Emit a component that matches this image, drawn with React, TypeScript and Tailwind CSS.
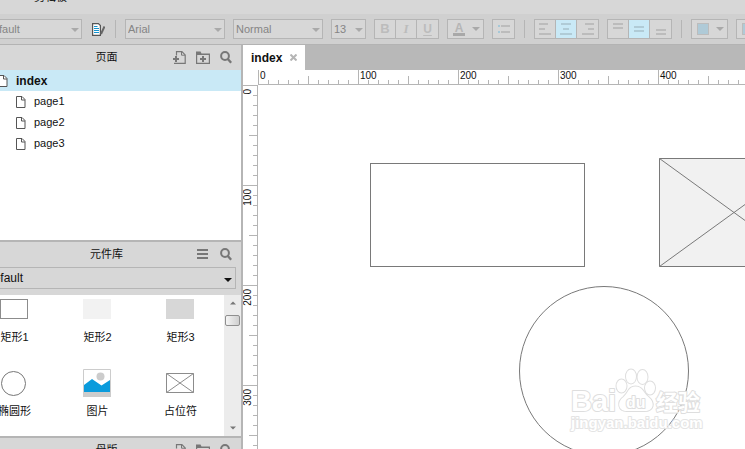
import type { ReactNode } from "react";
import { clsx } from "clsx";

const pages = ["page1", "page2", "page3"];

const ticks = Array.from({ length: 200 }, (_, i) => i);

const alignments = [
  { label: "左对齐", bars: [[0, 9], [0, 6], [0, 12]], side: "start" },
  { label: "居中对齐", bars: [[1, 10], [3, 6], [0, 12]], side: "center" },
  { label: "右对齐", bars: [[3, 9], [6, 6], [0, 12]], side: "end" },
];

const verticals = [
  { label: "顶部对齐", ys: [1, 5] },
  { label: "垂直居中", ys: [4, 8] },
  { label: "底部对齐", ys: [7, 11] },
];

function Caret({ className }: { className?: string }) {
  return (
    <svg viewBox="0 0 8 4" className={clsx("pointer-events-none h-1 w-2", className)} aria-hidden>
      <path d="M0 0h8L4 4z" fill="currentColor" />
    </svg>
  );
}

function PageIcon() {
  return (
    <svg viewBox="0 0 10 12" className="h-3 w-[10px] shrink-0" fill="none" stroke="#555" aria-hidden>
      <path d="M.5.5h5.500l3 3v8H.5z" fill="#fff" />
      <path d="M5.500.5v3.500h3.500" />
    </svg>
  );
}

function AddPageIcon() {
  return (
    <svg viewBox="0 0 13 13" className="size-[13px]" fill="none" stroke="#777" aria-hidden>
      <path d="M3.500 4.500V.6h5.400l3.300 3.300v8.500H1" strokeWidth="1.200" />
      <path d="M8.500.7v3.500h3.500" />
      <path d="M3 5v6M0 8h6" strokeWidth="2" />
    </svg>
  );
}

function AddFolderIcon() {
  return (
    <svg viewBox="0 0 14 13" className="h-[13px] w-[14px]" fill="none" stroke="#777" aria-hidden>
      <path d="M0 .5h4.500l1 2H14v1.500H0z" fill="#777" stroke="none" />
      <path d="M.6 3v9.400h12.800V3" strokeWidth="1.200" />
      <path d="M7 5v6M4 8h6" strokeWidth="2" />
    </svg>
  );
}

function SearchIcon() {
  return (
    <svg viewBox="0 0 12 13" className="h-[13px] w-3" fill="none" stroke="#777" strokeWidth="2" aria-hidden>
      <circle cx="5" cy="5" r="3.900" />
      <path d="M7.800 8l3.400 3.800" strokeWidth="2.400" />
    </svg>
  );
}

function MenuIcon() {
  return (
    <svg viewBox="0 0 11 11" className="size-[11px]" fill="#777" aria-hidden>
      <path d="M0 0h11v2H0zM0 4h11v2H0zM0 8h11v2H0z" />
    </svg>
  );
}

function ToolSelect({ label, value, className }: { label: string; value: string; className: string }) {
  return (
    <div className={clsx("relative shrink-0", className)}>
      <select
        aria-label={label}
        className="block h-5 w-full appearance-none border border-[#b5b5b5] bg-[#d7d7d7] pl-0.5 text-[11px] text-[#858585]"
      >
        <option>{value}</option>
      </select>
      <Caret className="absolute top-[9px] right-[3px] text-[#a9a9a9]" />
    </div>
  );
}

function ToolButton({ label, active, children }: { label: string; active?: boolean; children: ReactNode }) {
  return (
    <button
      type="button"
      aria-label={label}
      className={clsx(
        "flex h-[18px] w-[21px] items-center justify-center",
        active ? "bg-[#c9e9f6] text-[#b0cbd6]" : "text-[#bcbcbc]"
      )}
    >
      {children}
    </button>
  );
}

function ButtonGroup({ children }: { children: ReactNode }) {
  return (
    <div className="flex shrink-0 divide-x divide-[#b5b5b5] border border-[#b5b5b5] bg-[#d7d7d7]">
      {children}
    </div>
  );
}

function Separator() {
  return <div className="mx-px h-[18px] w-px shrink-0 bg-[#b5b5b5]" />;
}

function Toolbar() {
  return (
    <div className="flex h-[31px] shrink-0 items-center gap-2 overflow-hidden border-b border-[#b3b3b3] bg-[#d0d0d0] pl-[10px]">
      <ToolSelect label="样式" value="Default" className="w-[100px]" />
      <button type="button" aria-label="样式管理" className="mr-px ml-0.5 shrink-0">
        <svg viewBox="0 0 13 13" className="size-[13px]" fill="none" aria-hidden>
          <path d="M.6.6h5.800l2 2v9.800H.6z" fill="#fff" stroke="#555" strokeWidth="1.200" />
          <path d="M2 3.500h3.500M2 5.500h5M2 7.500h5M2 9.500h5" stroke="#1294d0" />
          <path d="M12.500 3.500L9 11" stroke="#666" strokeWidth="2" />
        </svg>
      </button>
      <Separator />
      <ToolSelect label="字体" value="Arial" className="w-[100px]" />
      <ToolSelect label="字型" value="Normal" className="w-[90px]" />
      <ToolSelect label="字号" value="13" className="w-[35px]" />
      <ButtonGroup>
        <ToolButton label="粗体">
          <span className="text-[13px] font-bold">B</span>
        </ToolButton>
        <ToolButton label="斜体">
          <span className="font-['Liberation_Serif',serif] text-[13px] font-bold italic">I</span>
        </ToolButton>
        <ToolButton label="下划线">
          <span className="text-[12px] font-bold underline underline-offset-2">U</span>
        </ToolButton>
      </ButtonGroup>
      <button
        type="button"
        aria-label="文字颜色"
        className="flex h-5 w-[37px] shrink-0 items-center justify-between border border-[#b5b5b5] bg-[#d7d7d7] pr-[3px] pl-[5px] text-[#a9a9a9]"
      >
        <span className="w-3 border-b-3 border-[#a9a9a9] text-[12px]/[10px] font-bold text-[#b5b5b5]">A</span>
        <Caret />
      </button>
      <ButtonGroup>
        <ToolButton label="项目符号">
          <svg viewBox="0 0 12 8" className="h-2 w-3" aria-hidden>
            <path d="M0 0h2v2H0zM0 6h2v2H0z" fill="#a5c8d8" />
            <path d="M3 0h9v2H3zM3 6h9v2H3z" fill="currentColor" />
          </svg>
        </ToolButton>
      </ButtonGroup>
      <Separator />
      <ButtonGroup>
        {alignments.map((a) => (
          <ToolButton key={a.label} label={a.label} active={a.side === "center"}>
            <svg viewBox="0 0 12 12" className="size-3" fill="currentColor" aria-hidden>
              {a.bars.map(([x, w], i) => (
                <rect key={i} x={x} y={i * 5} width={w} height="2" />
              ))}
            </svg>
          </ToolButton>
        ))}
      </ButtonGroup>
      <ButtonGroup>
        {verticals.map((v, i) => (
          <ToolButton key={v.label} label={v.label} active={i === 1}>
            <svg viewBox="0 0 10 14" className="h-[14px] w-[10px]" fill="currentColor" aria-hidden>
              {v.ys.map((y) => (
                <rect key={y} y={y} width="10" height="2" />
              ))}
            </svg>
          </ToolButton>
        ))}
      </ButtonGroup>
      <Separator />
      {["填充颜色", "线条颜色"].map((label) => (
        <button
          key={label}
          type="button"
          aria-label={label}
          className="flex h-5 w-[37px] shrink-0 items-center justify-between border border-[#b5b5b5] bg-[#d7d7d7] pr-[3px] pl-[5px] text-[#a9a9a9]"
        >
          <span className="size-3 border border-[#bcbcbc] bg-[#afcad7]" />
          <Caret />
        </button>
      ))}
    </div>
  );
}

function PanelHeader({ title, children }: { title: string; children: ReactNode }) {
  return (
    <div className="relative flex h-[25px] shrink-0 items-center justify-center bg-[#d7d7d7]">
      <h2 className="text-[11px]">{title}</h2>
      <div className="absolute right-[9px] flex items-center gap-[10px]">{children}</div>
    </div>
  );
}

function PageTools() {
  return (
    <>
      <button type="button" aria-label="新增页面">
        <AddPageIcon />
      </button>
      <button type="button" aria-label="新增文件夹">
        <AddFolderIcon />
      </button>
      <button type="button" aria-label="搜索">
        <SearchIcon />
      </button>
    </>
  );
}

function PagesPanel() {
  return (
    <section className="flex h-[195px] shrink-0 flex-col">
      <PanelHeader title="页面">
        <PageTools />
      </PanelHeader>
      <ul className="flex-1 bg-white">
        <li className="flex h-[21px] items-center gap-2 bg-[#c9e9f6] pl-[26px] text-[12px] font-bold">
          <PageIcon />
          index
        </li>
        {pages.map((p) => (
          <li key={p} className="flex h-[21px] items-center gap-2 pl-11 text-[11px]">
            <PageIcon />
            {p}
          </li>
        ))}
      </ul>
    </section>
  );
}

const widgets = [
  { name: "矩形1", art: <div className="h-5 w-7 border border-[#8c8c8c] bg-white" /> },
  { name: "矩形2", art: <div className="h-5 w-7 bg-[#f2f2f2]" /> },
  { name: "矩形3", art: <div className="h-5 w-7 bg-[#d7d7d7]" /> },
  { name: "椭圆形", art: <div className="size-[25px] rounded-full border border-[#777]" /> },
  {
    name: "图片",
    art: (
      <svg viewBox="0 0 28 28" className="size-7" aria-hidden>
        <path d="M.5.5h27v27H.5z" fill="#fff" stroke="#ccc" />
        <path d="M0 23h28v5H0z" fill="#ccc" />
        <circle cx="17.500" cy="7.500" r="4" fill="#ccc" />
        <path d="M1 16l8-6 9.500 6.500 8.500-5.500v12H1z" fill="#0a9bdc" />
      </svg>
    ),
  },
  {
    name: "占位符",
    art: (
      <svg viewBox="0 0 28 20" className="h-5 w-7" fill="none" stroke="#8c8c8c" aria-hidden>
        <path d="M.5.5h27v19H.5zM.5.500l27 19M27.500.5l-27 19" />
      </svg>
    ),
  },
];

function LibraryPanel() {
  return (
    <section className="flex h-[196px] shrink-0 flex-col border-t-2 border-[#b5b5b5]">
      <PanelHeader title="元件库">
        <button type="button" aria-label="菜单">
          <MenuIcon />
        </button>
        <button type="button" aria-label="搜索" className="ml-0.5">
          <SearchIcon />
        </button>
      </PanelHeader>
      <div className="bg-[#d7d7d7] pr-[5px] pb-[6px] pl-[10px]">
        <div className="relative">
          <select
            aria-label="元件库选择"
            className="block h-[22px] w-full appearance-none border border-[#b5b5b5] bg-[#d7d7d7] pl-0.5 text-[12px]"
          >
            <option>Default</option>
          </select>
          <Caret className="absolute top-[11px] right-1" />
        </div>
      </div>
      <div className="flex min-h-0 flex-1 bg-white">
        <div className="grid min-w-0 flex-1 auto-rows-[74px] grid-cols-[repeat(3,83px)] overflow-hidden">
          {widgets.map((w) => (
            <div key={w.name} className="flex flex-col items-center">
              <div className="flex h-7 shrink-0 items-center">{w.art}</div>
              <span className="mt-[6px] pl-0.5 text-[11px]/[16px]">{w.name}</span>
            </div>
          ))}
        </div>
        <div className="flex w-[17px] flex-col items-center bg-[#ececec] py-[6px] text-[#777]">
          <Caret className="w-[6px] rotate-180" />
          <div className="mt-[10px] h-[11px] w-[15px] rounded-xs border border-[#8f8f8f] bg-linear-to-r from-[#f5f5f5] to-[#cfcfcf]" />
          <Caret className="mt-auto w-[6px]" />
        </div>
      </div>
    </section>
  );
}

function HorizontalRuler() {
  return (
    <div className="flex h-[15px] min-w-0 flex-1 items-end overflow-hidden border-b border-[#b5b5b5]">
      {ticks.map((i) => (
        <div
          key={i}
          className={clsx(
            "w-[10px] shrink-0 border-l border-[#b5b5b5]",
            i % 10 === 0 ? "h-full" : i % 5 === 0 ? "h-2" : "h-1"
          )}
        >
          {i % 10 === 0 && <span className="block pt-px pl-px text-[10px]/[10px]">{i * 10}</span>}
        </div>
      ))}
    </div>
  );
}

function VerticalRuler() {
  return (
    <div className="flex w-[15px] shrink-0 flex-col items-end overflow-hidden border-r border-[#b5b5b5]">
      {ticks.map((i) => (
        <div
          key={i}
          className={clsx(
            "h-[10px] shrink-0 border-t border-[#b5b5b5]",
            i % 10 === 0 ? "w-full" : i % 5 === 0 ? "w-2" : "w-1"
          )}
        >
          {i % 10 === 0 && (
            <span className="block rotate-180 pb-[3px] pl-[3px] text-[10px]/[10px] [writing-mode:vertical-rl]">
              {i * 10}
            </span>
          )}
        </div>
      ))}
    </div>
  );
}

function Watermark() {
  return (
    <svg
      viewBox="0 0 140 70"
      className="absolute top-[280px] left-[310px] h-[70px] w-[140px]"
      fill="#fff"
      stroke="#dedede"
      strokeWidth="2"
      strokeLinejoin="round"
      paintOrder="stroke"
      fontFamily="'Liberation Sans', 'Noto Sans CJK SC', sans-serif"
      fontWeight="700"
      aria-hidden
    >
      <text x="3" y="46" fontSize="29">Bai</text>
      <ellipse cx="53.500" cy="21" rx="5" ry="6.500" />
      <ellipse cx="63" cy="11.500" rx="5" ry="7" />
      <ellipse cx="74.500" cy="12" rx="5" ry="7" />
      <ellipse cx="82" cy="23" rx="5" ry="6.500" />
      <path d="M67.500 21.500c-7 0-7 6-12 10.500-7 5-5 14 3 14h18c9 0 11-8 4-14-5-4-6-10.500-13-10.500z" />
      <text x="58" y="43" fontSize="16">du</text>
      <text x="88" y="45" fontSize="22">经验</text>
      <text x="3" y="63" fontSize="15" stroke="#e4e4e4">jingyan.baidu.com</text>
    </svg>
  );
}

function Canvas() {
  return (
    <div className="relative min-w-0 flex-1 overflow-hidden bg-white">
      <div className="absolute top-[78px] left-[112px] h-[104px] w-[215px] border border-[#797979]" />
      <svg
        viewBox="0 0 150 109"
        className="absolute top-[73px] left-[401px] h-[109px] w-[150px]"
        fill="#f1f1f1"
        stroke="#797979"
        aria-hidden
      >
        <path d="M.5.5h149v108H.5zM.5.500l149 108M149.500.5l-149 108" />
      </svg>
      <div className="absolute top-[201px] left-[261px] size-[170px] rounded-full border border-[#797979]" />
      <Watermark />
    </div>
  );
}

export default function App() {
  return (
    <div className="h-screen overflow-hidden bg-[#d7d7d7] font-['Liberation_Sans','Noto_Sans_CJK_SC',sans-serif] text-[#111]">
      <div className="-ml-7 flex h-full flex-col">
        <div className="flex h-[14px] shrink-0 items-end overflow-hidden pb-[10px] pl-[62px] text-[11px]/[14px]">
          <span>剪辑板</span>
          <div className="ml-[501px] flex gap-[41px] leading-[18px] text-[#777]">
            <span>齐</span>
            <span>齐</span>
          </div>
        </div>
        <Toolbar />
        <div className="flex min-h-0 flex-1">
          <aside className="flex w-[271px] shrink-0 flex-col overflow-hidden border-r-2 border-[#b5b5b5]">
            <PagesPanel />
            <LibraryPanel />
            <section className="border-t-2 border-[#b5b5b5]">
              <PanelHeader title="母版">
                <PageTools />
              </PanelHeader>
            </section>
          </aside>
          <main className="flex min-w-0 flex-1 flex-col bg-white">
            <div className="flex h-[25px] shrink-0 bg-[#b8b8b8]">
              <div className="flex items-center gap-2 bg-white px-2 text-[12px] font-bold">
                index
                <button type="button" aria-label="关闭">
                  <svg viewBox="0 0 7 7" className="size-[7px]" stroke="#b5b5b5" strokeWidth="2" aria-hidden>
                    <path d="M.5.5l6 6M6.500.5l-6 6" />
                  </svg>
                </button>
              </div>
            </div>
            <div className="flex shrink-0">
              <div className="w-[15px] shrink-0" />
              <HorizontalRuler />
            </div>
            <div className="flex min-h-0 flex-1">
              <VerticalRuler />
              <Canvas />
            </div>
          </main>
        </div>
      </div>
    </div>
  );
}
